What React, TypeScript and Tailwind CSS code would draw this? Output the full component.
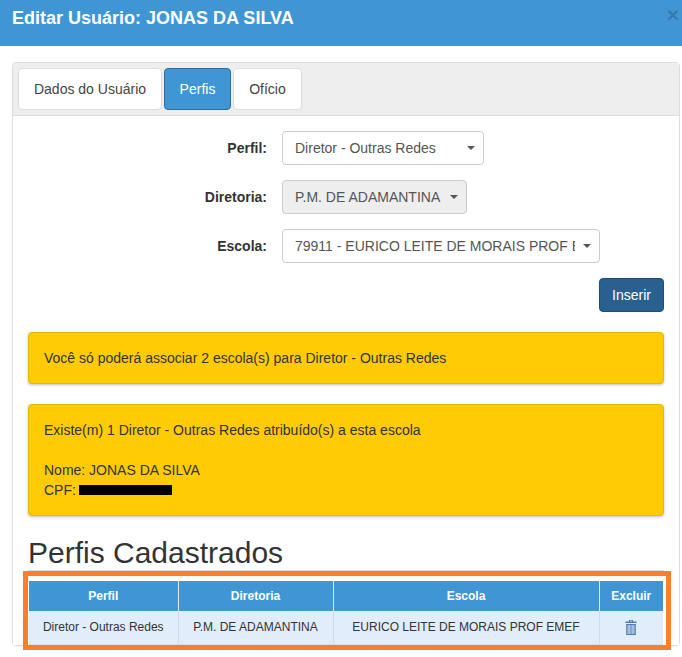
/* ── Form row: right-aligned label + fake select ─────────────────────────── */
function SelectRow({
  label,
  value,
  width,
  disabled = false,
}: {
  label: string;
  value: string;
  width: string;
  disabled?: boolean;
}) {
  return (
    <div className="flex h-[34px] items-center">
      <label className="w-[239px] text-right text-[14px] font-bold text-[#333]">{label}</label>
      <div
        className={`ml-[15px] flex h-[34px] items-center rounded-[4px] border border-[#ccc] pl-[12px] text-[14px] text-[#555] ${width} ${
          disabled ? "bg-[#eee]" : "bg-white"
        }`}
      >
        <span className="flex-1 overflow-hidden whitespace-nowrap">{value}</span>
        <span className="mx-[8px] h-0 w-0 shrink-0 border-x-[4px] border-t-[4px] border-x-transparent border-t-[#555]" />
      </div>
    </div>
  );
}

function Alert({ children }: { children: React.ReactNode }) {
  return (
    <div className="rounded-[4px] border border-[#e6b800] bg-[#ffcb05] p-[15px] text-[14px] leading-[20px] text-[#333] shadow-[0_1px_3px_rgba(0,0,0,0.25)]">
      {children}
    </div>
  );
}

/* ── Glyphicon-style trash can ───────────────────────────────────────────── */
function TrashIcon() {
  return (
    <svg viewBox="0 0 12 15" className="mx-auto h-[15px] w-[12px]" fill="#4a7ab3" aria-hidden="true">
      <path d="M4 0h4v1.5h3.5V3H.5V1.5H4zM5 .8v.7h2V.8z" />
      <path d="M1.2 4h9.6v11H1.2zM2.6 5v9h1V5zM4.4 5v9h1V5zM6.6 5v9h1V5zM8.4 5v9h1V5z" fillRule="evenodd" />
    </svg>
  );
}

const tabBase = "flex h-[42px] items-center rounded-[4px] border text-[14px]";

export default function App() {
  return (
    <div className="relative h-[657px] w-[682px] overflow-hidden bg-white font-['Liberation_Sans',Arial,sans-serif] text-[14px]">
      {/* Modal header */}
      <div className="flex h-[46px] items-start justify-between bg-[#4096d4] pl-[12px] pr-[3px]">
        <h4 className="mt-[8px] text-[18px] leading-[20px] font-bold text-white">Editar Usuário: JONAS DA SILVA</h4>
        <span className="mt-[4px] text-[21px] leading-[21px] font-bold text-black/20">×</span>
      </div>

      {/* Panel */}
      <div className="mt-[16px] ml-[12px] w-[668px] rounded-[4px] border border-[#ddd] shadow-[0_1px_1px_rgba(0,0,0,0.05)]">
        <div className="flex h-[53px] gap-[2px] border-b border-[#ddd] bg-[#eee] pt-[5px] pl-[5px]">
          <div className={`${tabBase} w-[144px] justify-center border-[#ddd] bg-white text-[#444]`}>Dados do Usuário</div>
          <div className={`${tabBase} w-[67px] justify-center border-[#2e6da4] bg-[#4096d4] text-white`}>Perfis</div>
          <div className={`${tabBase} w-[69px] justify-center border-[#ddd] bg-white text-[#444]`}>Ofício</div>
        </div>

        <div className="bg-white px-[15px] pt-[15px]">
          <div className="flex flex-col gap-[15px]">
            <SelectRow label="Perfil:" value="Diretor - Outras Redes" width="w-[202px]" />
            <SelectRow label="Diretoria:" value="P.M. DE ADAMANTINA" width="w-[185px]" disabled />
            <SelectRow label="Escola:" value="79911 - EURICO LEITE DE MORAIS PROF EMEF" width="w-[318px]" />
          </div>

          <div className="mt-[15px] flex justify-end">
            <button className="h-[34px] w-[65px] rounded-[4px] border border-[#204d74] bg-[#286090] text-[14px] text-white">
              Inserir
            </button>
          </div>

          <div className="mt-[20px] flex flex-col gap-[20px]">
            <Alert>Você só poderá associar 2 escola(s) para Diretor - Outras Redes</Alert>
            <Alert>
              Existe(m) 1 Diretor - Outras Redes atribuído(s) a esta escola
              <br />
              <br />
              Nome: JONAS DA SILVA
              <br />
              <span className="flex items-center">
                CPF:
                <span className="ml-[3px] inline-block h-[10px] w-[93px] bg-black" />
              </span>
            </Alert>
          </div>

          <h2 className="mt-[20px] text-[30px] leading-[33px] font-normal text-[#333]">Perfis Cadastrados</h2>
          <div className="mt-[1px] border-t border-[#ddd]" />

          <table className="mt-[10px] ml-[1px] w-[634px] table-fixed border-collapse text-center text-[12px]">
            <colgroup>
              <col className="w-[149px]" />
              <col className="w-[155px]" />
              <col className="w-[266px]" />
              <col className="w-[64px]" />
            </colgroup>
            <thead>
              <tr className="h-[30px] bg-[#4096d4] font-bold text-white">
                <th className="border-r border-[#d9e8f5]">Perfil</th>
                <th className="border-r border-[#d9e8f5]">Diretoria</th>
                <th className="border-r border-[#d9e8f5]">Escola</th>
                <th>Excluir</th>
              </tr>
            </thead>
            <tbody>
              <tr className="h-[33px] border-b border-[#ddd] bg-[#e1edfa] text-[#333]">
                <td className="border-r border-[#cfdbe6]">Diretor - Outras Redes</td>
                <td className="border-r border-[#cfdbe6]">P.M. DE ADAMANTINA</td>
                <td className="border-r border-[#cfdbe6]">EURICO LEITE DE MORAIS PROF EMEF</td>
                <td>
                  <TrashIcon />
                </td>
              </tr>
            </tbody>
          </table>
        </div>
      </div>

      {/* Orange highlight drawn over the table */}
      <div className="pointer-events-none absolute top-[571px] left-[23px] h-[79px] w-[648px] border-[5px] border-[#fb7e2b]" />
    </div>
  );
}
